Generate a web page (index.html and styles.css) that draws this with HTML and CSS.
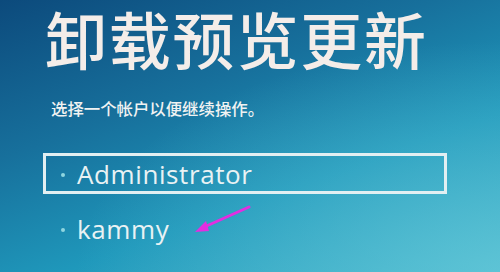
FILE: index.html
```html
<!DOCTYPE html>
<html lang="zh-CN">
<head>
  <meta charset="UTF-8" />
  <title>卸载预览更新</title>
  <link rel="stylesheet" href="styles.css">
</head>
<body>

  <div class="screen">
    <h1 class="title">卸载预览更新</h1>
    <p class="hint">选择一个帐户以便继续操作。</p>

    <ul class="accounts">
      <li class="account selected"><span class="dot"></span>Administrator</li>
      <li class="account"><span class="dot"></span>kammy</li>
    </ul>

    <!-- 标注箭头 -->
    <svg class="arrow" width="70" height="34" viewBox="0 0 70 34">
      <path d="M59 3 L12 24" stroke="#e22ee0" stroke-width="3" stroke-linecap="round" fill="none"/>
      <path d="M5 28 L16 17 L19 27 Z" fill="#e22ee0"/>
    </svg>
  </div>

</body>
</html>
```

FILE: styles.css
```css
html, body {
  margin: 0;
  height: 100%;
}
body {
  font-family: "Open Sans", "Noto Sans CJK SC", sans-serif;
  color: #eef6f8;
  background:
    radial-gradient(ellipse at 100% 100%, rgba(110, 205, 220, 0.6), rgba(110, 205, 220, 0) 60%),
    linear-gradient(160deg, #0c4a7c 0%, #17709c 35%, #1f98bb 65%, #44b6cc 100%);
  overflow: hidden;
}
.screen {
  position: relative;
  height: 100%;
  padding: 0 0 0 45px;
  box-sizing: border-box;
}
.title {
  margin: 0;
  padding-top: 2px;
  font-family: "Noto Sans CJK SC", sans-serif;
  font-weight: 500;
  font-size: 62px;
  line-height: 72px;
  letter-spacing: 1.8px;
  color: #f4ede9;
}
.hint {
  margin: 24px 0 0 6px;
  font-family: "Noto Sans CJK SC", sans-serif;
  font-weight: 500;
  font-size: 16.4px;
  line-height: 20px;
  color: #f0f2f2;
}
.accounts {
  list-style: none;
  margin: 35px 0 0 -2px;
  padding: 0;
}
.account {
  display: flex;
  align-items: center;
  width: 398px;
  height: 35px;
  border: 3px solid transparent;
  font-size: 26px;
  font-weight: 500;
  letter-spacing: 0.6px;
  color: #e9f2f4;
  margin-bottom: 14px;
}
.account.selected {
  border-color: #e2eff2;
}
.dot {
  width: 4px;
  height: 4px;
  border-radius: 50%;
  background: #8fd6e0;
  margin: 2px 12px 0 15px;
}
.arrow {
  position: absolute;
  left: 190px;
  top: 204px;
}
```
